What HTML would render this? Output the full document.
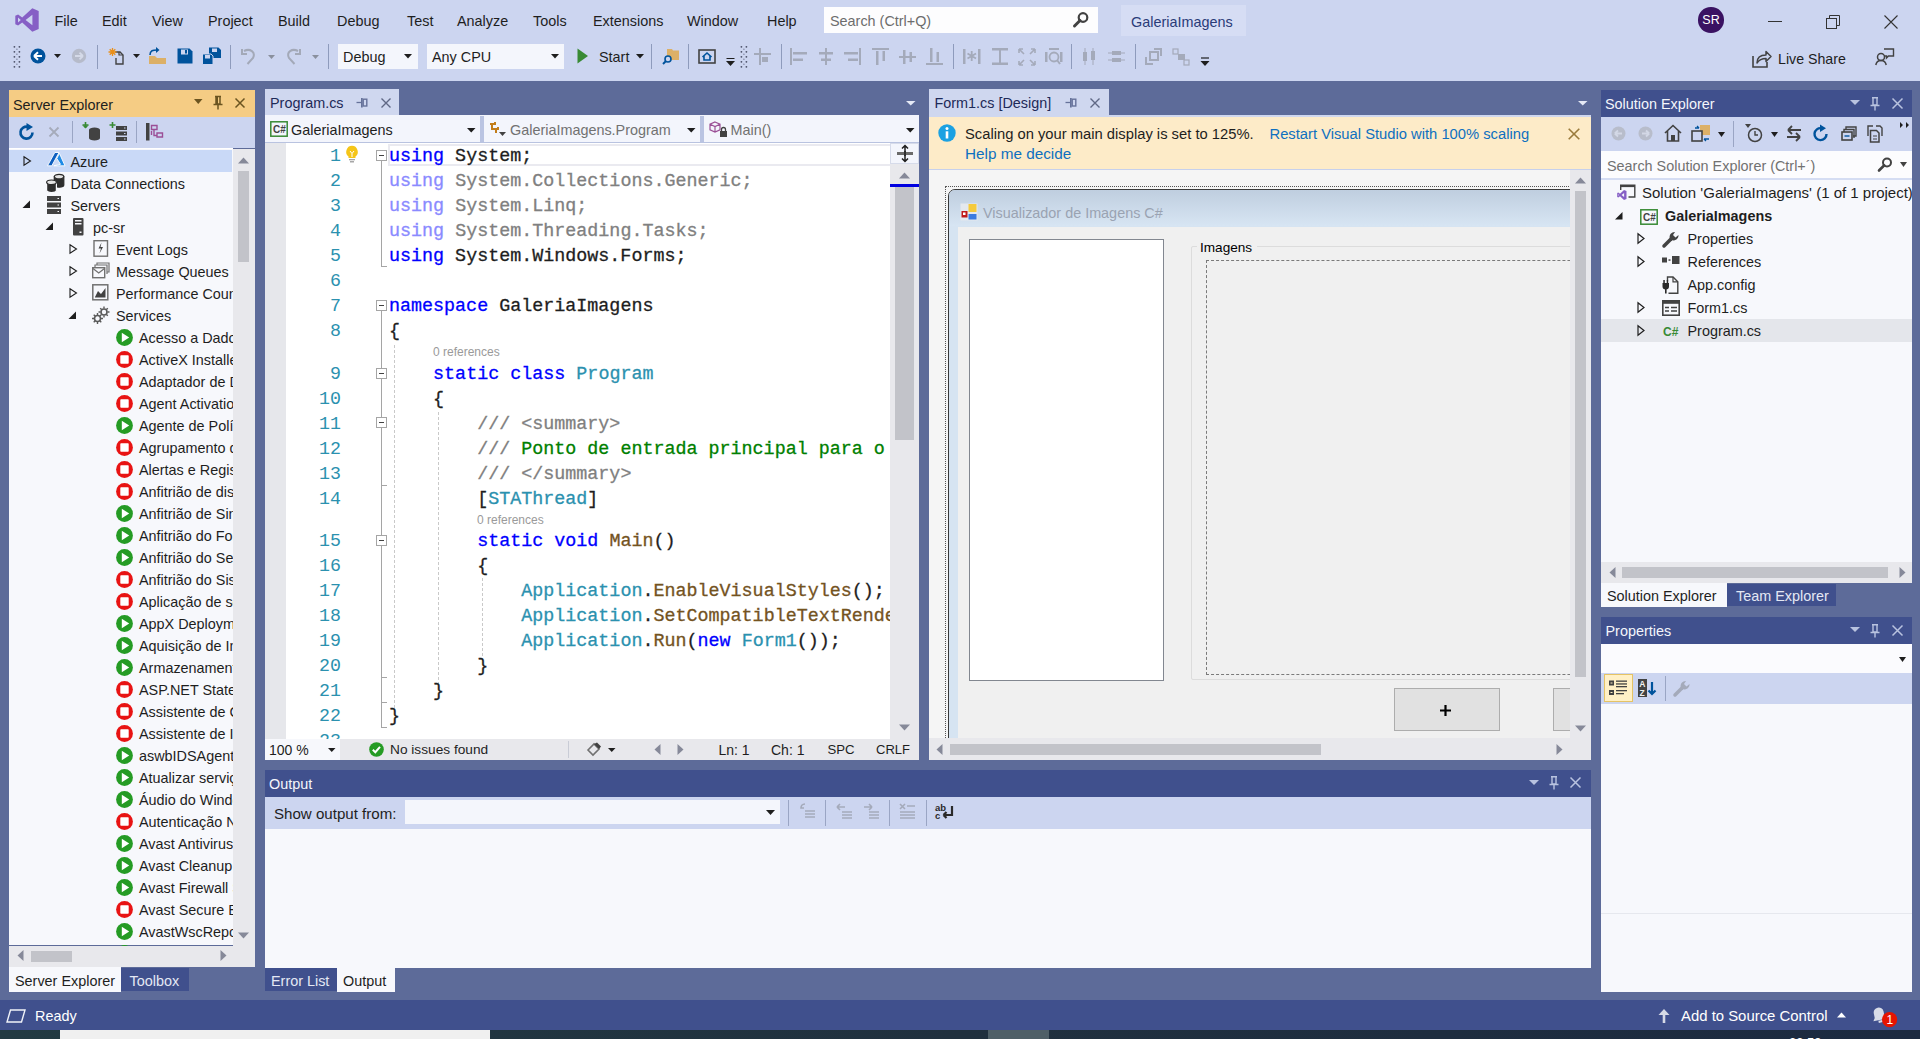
<!DOCTYPE html>
<html><head><meta charset="utf-8">
<style>
*{margin:0;padding:0;box-sizing:border-box}
html,body{width:1920px;height:1039px;overflow:hidden}
body{background:#5D6B99;font-family:"Liberation Sans",sans-serif;font-size:14.4px;color:#1E1E1E;position:relative}
.a{position:absolute}
.t{position:absolute;white-space:nowrap;line-height:16px;height:16px}
.mono{font-family:"Liberation Mono",monospace}
svg{position:absolute;overflow:visible}
.code div{position:absolute;-webkit-text-stroke:0.3px currentColor;white-space:pre;font-family:"Liberation Mono",monospace;font-size:18.38px;line-height:25px;height:25px}
.ln{position:absolute;font-family:"Liberation Mono",monospace;font-size:18.28px;line-height:25px;color:#2B91AF;text-align:right;width:60px}
.kw{color:#0000FF}.ty{color:#2B91AF}.cm{color:#008000}.dg{color:#808080}.mt{color:#74531F}.uk{color:#8A8AFF}
.row{position:absolute;height:22px;line-height:22px;white-space:nowrap}
</style></head><body>
<div class="a" style="left:9px;top:149px;width:224px;height:796px;background:#F7F8FC"></div>
<div class="a" style="left:265px;top:143px;width:625px;height:596px;background:#FFFFFF"></div>
<div class="a" style="left:929px;top:170px;width:646px;height:570px;background:#F5F5F5"></div>
<div class="a" style="left:265px;top:829px;width:1326px;height:139px;background:#F7F8FC"></div>
<div class="a" style="left:1601px;top:178px;width:311px;height:384px;background:#F7F8FC"></div>
<div class="a" style="left:1601px;top:703px;width:311px;height:289px;background:#F7F8FC"></div>
<div class="a" style="left:0;top:1000px;width:1920px;height:30px;background:#40508D"></div>
<div class="a" style="left:0;top:1030px;width:1920px;height:9px;background:linear-gradient(to right,#223A42,#20303E 50%,#1C2A40)"></div>
<div class="a" style="left:0;top:0;width:1920px;height:81px;background:#CCD5F0"></div>
<svg style="left:15px;top:8px" width="24" height="24" viewBox="0 0 24 24"><path fill="#865FC5" fill-rule="evenodd" d="M17.3 0.3 L23.7 2.9 V21.1 L17.3 23.7 L7.2 14.6 L3.1 17.6 L0.3 16.2 V7.8 L3.1 6.4 L7.2 9.4 Z M17.4 6.8 L10.6 12 L17.4 17.2 Z M3 9.4 V14.6 L5.8 12 Z"/></svg>
<div class="t" style="left:54.5px;top:12.5px">File</div>
<div class="t" style="left:102px;top:12.5px">Edit</div>
<div class="t" style="left:152px;top:12.5px">View</div>
<div class="t" style="left:208px;top:12.5px">Project</div>
<div class="t" style="left:278px;top:12.5px">Build</div>
<div class="t" style="left:337px;top:12.5px">Debug</div>
<div class="t" style="left:407px;top:12.5px">Test</div>
<div class="t" style="left:457px;top:12.5px">Analyze</div>
<div class="t" style="left:533px;top:12.5px">Tools</div>
<div class="t" style="left:593px;top:12.5px">Extensions</div>
<div class="t" style="left:687px;top:12.5px">Window</div>
<div class="t" style="left:767px;top:12.5px">Help</div>
<div class="a" style="left:824px;top:7px;width:274px;height:26px;background:#FDFDFE"></div>
<div class="t" style="left:830px;top:12.5px;color:#6D6D6D">Search (Ctrl+Q)</div>
<svg style="left:1072px;top:11px" width="18" height="18" viewBox="0 0 18 18"><circle cx="11" cy="6.5" r="4.3" fill="none" stroke="#424242" stroke-width="2.2"/><path d="M8 9.5 L2.5 15" stroke="#424242" stroke-width="3" stroke-linecap="round"/></svg>
<div class="a" style="left:1121px;top:5px;width:125px;height:31px;background:#D6DDF4"></div>
<div class="t" style="left:1131px;top:14px;color:#2A3B78">GaleriaImagens</div>
<div class="a" style="left:1698px;top:7px;width:25.5px;height:25.5px;border-radius:50%;background:#3A1262"></div>
<div class="t" style="left:1700px;top:12px;width:22px;text-align:center;color:#fff;font-size:12.5px">SR</div>
<div class="a" style="left:1768px;top:21px;width:14px;height:1px;background:#333"></div>
<svg style="left:1826px;top:15px" width="14" height="14" viewBox="0 0 14 14"><rect x="0.5" y="3.5" width="10" height="10" fill="none" stroke="#333"/><path d="M3.5 3.5 V0.5 H13.5 V10.5 H10.5" fill="none" stroke="#333"/></svg>
<svg style="left:1884px;top:15px" width="14" height="14" viewBox="0 0 14 14"><path d="M0.5 0.5 L13.5 13.5 M13.5 0.5 L0.5 13.5" stroke="#333" stroke-width="1.1"/></svg>
<!-- toolbar -->
<svg style="left:13px;top:46px" width="8" height="24" viewBox="0 0 8 24"><g fill="#4A4F66"><circle cx="1.4" cy="0.8" r=".9"/><circle cx="6.4" cy="0.8" r=".9"/><circle cx="1.4" cy="5.8" r=".9"/><circle cx="6.4" cy="5.8" r=".9"/><circle cx="1.4" cy="10.8" r=".9"/><circle cx="6.4" cy="10.8" r=".9"/><circle cx="1.4" cy="15.8" r=".9"/><circle cx="6.4" cy="15.8" r=".9"/><circle cx="1.4" cy="20.8" r=".9"/><circle cx="6.4" cy="20.8" r=".9"/><circle cx="3.9" cy="3.3" r=".8" fill-opacity=".55"/><circle cx="3.9" cy="8.3" r=".8" fill-opacity=".55"/><circle cx="3.9" cy="13.3" r=".8" fill-opacity=".55"/><circle cx="3.9" cy="18.3" r=".8" fill-opacity=".55"/></g></svg>
<svg style="left:30px;top:48px" width="16" height="16" viewBox="0 0 16 16"><circle cx="8" cy="8" r="7.5" fill="#00539C"/><path d="M4 8 L8 4.3 M4 8 L8 11.7 M4 8 H12" stroke="#fff" stroke-width="2" fill="none"/></svg>
<svg style="left:54px;top:54px" width="8" height="5" viewBox="0 0 8 5"><path d="M0 0 H7 L3.5 4 Z" fill="#1E1E1E"/></svg>
<svg style="left:71px;top:48px" width="16" height="16" viewBox="0 0 16 16"><circle cx="8" cy="8" r="7.2" fill="#B6BBCA"/><path d="M12 8 L8.5 4.7 M12 8 L8.5 11.3 M12 8 H4" stroke="#D5DAE8" stroke-width="1.8" fill="none"/></svg>
<div class="a" style="left:97px;top:45px;width:1px;height:24px;background:#8E9BBC"></div>
<svg style="left:108px;top:47px" width="18" height="18" viewBox="0 0 18 18"><path d="M7 5 H12 L15 8 V17 H8 V11" fill="none" stroke="#424242" stroke-width="1.4"/><path d="M11 5 V8 H15" fill="none" stroke="#424242" stroke-width="1.2"/><path d="M4.5 1 V9 M0.5 5 H8.5 M1.7 2.2 L7.3 7.8 M7.3 2.2 L1.7 7.8" stroke="#E98F1A" stroke-width="1.3"/></svg>
<svg style="left:133px;top:54px" width="8" height="5" viewBox="0 0 8 5"><path d="M0 0 H7 L3.5 4 Z" fill="#1E1E1E"/></svg>
<svg style="left:148px;top:47px" width="19" height="18" viewBox="0 0 19 18"><path d="M1 9 H7 L9 11 H18 V17 H1 Z" fill="#DCB067"/><path d="M2 8 C2 3.5 5 3 9 3" fill="none" stroke="#00539C" stroke-width="1.6"/><path d="M8 0 L11.5 3 L8 6 Z" fill="#00539C"/></svg>
<svg style="left:177px;top:48px" width="16" height="16" viewBox="0 0 16 16"><path d="M0.5 0.5 H12.5 L15.5 3.5 V15.5 H0.5 Z" fill="#00539C"/><rect x="4" y="1.5" width="7" height="5" fill="#CCD5F0"/><rect x="8" y="2" width="2" height="3.5" fill="#00539C"/></svg>
<svg style="left:202px;top:47px" width="20" height="18" viewBox="0 0 20 18"><path d="M7 0.5 H16.5 L19 3 V11 H7 Z" fill="#00539C"/><rect x="10" y="1.5" width="5" height="3.5" fill="#CCD5F0"/><path d="M0.5 7 H9 L11 9 V17.5 H0.5 Z" fill="#00539C" stroke="#CCD5F0"/><rect x="3" y="8" width="5" height="3.5" fill="#CCD5F0"/></svg>
<div class="a" style="left:230px;top:45px;width:1px;height:24px;background:#8E9BBC"></div>
<svg style="left:241px;top:48px" width="16" height="17" viewBox="0 0 16 17"><path d="M3 3 C9 0 15 4 12 10 L6.5 16" fill="none" stroke="#A3A9B8" stroke-width="2"/><path d="M1 1 V6 H6" fill="none" stroke="#A3A9B8" stroke-width="2"/></svg>
<svg style="left:268px;top:55px" width="8" height="5" viewBox="0 0 8 5"><path d="M0 0 H7 L3.5 4 Z" fill="#8A909E"/></svg>
<svg style="left:285px;top:48px" width="16" height="17" viewBox="0 0 16 17"><path d="M13 3 C7 0 1 4 4 10 L9.5 16" fill="none" stroke="#A3A9B8" stroke-width="2"/><path d="M15 1 V6 H10" fill="none" stroke="#A3A9B8" stroke-width="2"/></svg>
<svg style="left:312px;top:55px" width="8" height="5" viewBox="0 0 8 5"><path d="M0 0 H7 L3.5 4 Z" fill="#8A909E"/></svg>
<div class="a" style="left:328px;top:44px;width:1px;height:25px;background:#8E9BBC"></div>
<div class="a" style="left:338px;top:44px;width:80px;height:25px;background:#F4F6FC"></div>
<div class="t" style="left:343px;top:48.5px">Debug</div>
<svg style="left:404px;top:54px" width="9" height="5" viewBox="0 0 9 5"><path d="M0 0 H8 L4 4.5 Z" fill="#1E1E1E"/></svg>
<div class="a" style="left:427px;top:44px;width:137px;height:25px;background:#F4F6FC"></div>
<div class="t" style="left:432px;top:48.5px">Any CPU</div>
<svg style="left:551px;top:54px" width="9" height="5" viewBox="0 0 9 5"><path d="M0 0 H8 L4 4.5 Z" fill="#1E1E1E"/></svg>
<svg style="left:577px;top:48px" width="12" height="16" viewBox="0 0 12 16"><path d="M0.5 0.5 L11 8 L0.5 15.5 Z" fill="#388A34"/></svg>
<div class="t" style="left:599px;top:48.5px">Start</div>
<svg style="left:636px;top:54px" width="9" height="5" viewBox="0 0 9 5"><path d="M0 0 H8 L4 4.5 Z" fill="#1E1E1E"/></svg>
<div class="a" style="left:651px;top:44px;width:1px;height:25px;background:#8E9BBC"></div>
<svg style="left:662px;top:48px" width="18" height="17" viewBox="0 0 18 17"><path d="M5 1 H10 L11 2.5 H17 V12 H5 Z" fill="#DCB067"/><circle cx="6" cy="11" r="3" fill="#CCD5F0" stroke="#00539C" stroke-width="1.6"/><path d="M4 13 L1 16" stroke="#00539C" stroke-width="2"/></svg>
<div class="a" style="left:688px;top:44px;width:1px;height:25px;background:#8E9BBC"></div>
<svg style="left:698px;top:49px" width="18" height="15" viewBox="0 0 18 15"><rect x="1" y="1" width="16" height="13" fill="none" stroke="#424242" stroke-width="1.6"/><path d="M4.5 8 L9 4 L13.5 8 M6 7 V11 H12 V7" fill="none" stroke="#00539C" stroke-width="1.6"/></svg>
<svg style="left:726px;top:58px" width="9" height="10" viewBox="0 0 9 10"><path d="M0.5 0.5 H8.5" stroke="#1E1E1E"/><path d="M0 3 H9 L4.5 8 Z" fill="#1E1E1E"/></svg>
<svg style="left:740px;top:46px" width="8" height="24" viewBox="0 0 8 24"><g fill="#4A4F66"><circle cx="1.4" cy="0.8" r=".9"/><circle cx="6.4" cy="0.8" r=".9"/><circle cx="1.4" cy="5.8" r=".9"/><circle cx="6.4" cy="5.8" r=".9"/><circle cx="1.4" cy="10.8" r=".9"/><circle cx="6.4" cy="10.8" r=".9"/><circle cx="1.4" cy="15.8" r=".9"/><circle cx="6.4" cy="15.8" r=".9"/><circle cx="1.4" cy="20.8" r=".9"/><circle cx="6.4" cy="20.8" r=".9"/><circle cx="3.9" cy="3.3" r=".8" fill-opacity=".55"/><circle cx="3.9" cy="8.3" r=".8" fill-opacity=".55"/><circle cx="3.9" cy="13.3" r=".8" fill-opacity=".55"/><circle cx="3.9" cy="18.3" r=".8" fill-opacity=".55"/></g></svg>
<svg style="left:754px;top:48px" width="18" height="18" viewBox="0 0 18 18"><g fill="#A4AABA"><rect x="0" y="5" width="17" height="2"/><rect x="5" y="0" width="2" height="17"/><rect x="8" y="9" width="6" height="5"/></g></svg>
<div class="a" style="left:781px;top:44px;width:1px;height:25px;background:#8E9BBC"></div>
<svg style="left:790px;top:48px" width="18" height="18" viewBox="0 0 18 18"><g fill="#A4AABA"><rect x="0" y="0" width="2" height="17"/><rect x="3" y="4" width="14" height="2.5"/><rect x="3" y="10.5" width="10" height="2.5"/></g></svg>
<svg style="left:817px;top:48px" width="18" height="18" viewBox="0 0 18 18"><g fill="#A4AABA"><rect x="8" y="0" width="2" height="17"/><rect x="2" y="4" width="14" height="2.5"/><rect x="4" y="10.5" width="10" height="2.5"/></g></svg>
<svg style="left:844px;top:48px" width="18" height="18" viewBox="0 0 18 18"><g fill="#A4AABA"><rect x="15" y="0" width="2" height="17"/><rect x="0" y="4" width="14" height="2.5"/><rect x="4" y="10.5" width="10" height="2.5"/></g></svg>
<svg style="left:872px;top:48px" width="18" height="18" viewBox="0 0 18 18"><g fill="#A4AABA"><rect x="0" y="0" width="17" height="2"/><rect x="4" y="3" width="2.5" height="14"/><rect x="10.5" y="3" width="2.5" height="10"/></g></svg>
<svg style="left:899px;top:48px" width="18" height="18" viewBox="0 0 18 18"><g fill="#A4AABA"><rect x="0" y="8" width="17" height="2"/><rect x="4" y="2" width="2.5" height="14"/><rect x="10.5" y="4" width="2.5" height="10"/></g></svg>
<svg style="left:926px;top:48px" width="18" height="18" viewBox="0 0 18 18"><g fill="#A4AABA"><rect x="0" y="15" width="17" height="2"/><rect x="4" y="0" width="2.5" height="14"/><rect x="10.5" y="4" width="2.5" height="10"/></g></svg>
<div class="a" style="left:953px;top:44px;width:1px;height:25px;background:#8E9BBC"></div>
<svg style="left:963px;top:48px" width="18" height="18" viewBox="0 0 18 18"><g fill="#A4AABA"><rect x="0" y="1" width="2.5" height="15"/><rect x="15" y="1" width="2.5" height="15"/><path d="M8.7 3 V13 M4.5 5.5 L13 10.5 M13 5.5 L4.5 10.5" stroke="#A4AABA" stroke-width="1.8"/></g></svg>
<svg style="left:991px;top:48px" width="18" height="18" viewBox="0 0 18 18"><g fill="#A4AABA"><rect x="1" y="0" width="16" height="2.5"/><rect x="1" y="14.5" width="16" height="2.5"/><rect x="8" y="2" width="2" height="13"/></g></svg>
<svg style="left:1018px;top:48px" width="18" height="18" viewBox="0 0 18 18"><g stroke="#A4AABA" stroke-width="1.6" fill="none"><path d="M1 1 L6 6 M1 1 H5 M1 1 V5 M17 1 L12 6 M17 1 H13 M17 1 V5 M1 17 L6 12 M1 17 H5 M1 17 V13 M17 17 L12 12 M17 17 H13 M17 17 V13"/></g></svg>
<svg style="left:1045px;top:48px" width="18" height="18" viewBox="0 0 18 18"><g fill="#A4AABA"><rect x="0" y="4" width="2.5" height="10"/><rect x="15" y="4" width="2.5" height="10"/><rect x="4" y="0" width="10" height="2"/></g><circle cx="9" cy="9" r="4.5" fill="none" stroke="#A4AABA" stroke-width="1.8"/><path d="M12 12 L15 16" stroke="#A4AABA" stroke-width="2"/></svg>
<div class="a" style="left:1071px;top:44px;width:1px;height:25px;background:#8E9BBC"></div>
<svg style="left:1081px;top:48px" width="18" height="18" viewBox="0 0 18 18"><g fill="#A4AABA"><rect x="2" y="4" width="4" height="9"/><rect x="10" y="3" width="4" height="9"/><rect x="3.5" y="0" width="1" height="17"/><rect x="11.5" y="0" width="1" height="17"/></g></svg>
<svg style="left:1108px;top:48px" width="18" height="18" viewBox="0 0 18 18"><g fill="#A4AABA"><rect x="4" y="3" width="9" height="4"/><rect x="4" y="10" width="9" height="4"/><rect x="0" y="4.5" width="17" height="1"/><rect x="0" y="11.5" width="17" height="1"/></g></svg>
<div class="a" style="left:1135px;top:44px;width:1px;height:25px;background:#8E9BBC"></div>
<svg style="left:1145px;top:48px" width="18" height="18" viewBox="0 0 18 18"><g stroke="#A4AABA" stroke-width="2" fill="none"><rect x="5" y="4" width="8" height="8"/><path d="M9 1 H16 V8"/><path d="M1 9 V16 H8"/></g></svg>
<svg style="left:1172px;top:48px" width="18" height="18" viewBox="0 0 18 18"><g fill="#A4AABA"><rect x="1" y="1" width="5" height="5" fill="none" stroke="#A4AABA" stroke-width="1.2"/><rect x="6" y="6" width="7" height="6"/><rect x="12" y="12" width="5" height="5" fill="none" stroke="#A4AABA" stroke-width="1.2"/></g></svg>
<svg style="left:1200px;top:57px" width="10" height="10" viewBox="0 0 10 10"><path d="M1 1 H9" stroke="#1E1E1E" stroke-width="1.2"/><path d="M0.5 4 H9.5 L5 9 Z" fill="#1E1E1E"/></svg>
<svg style="left:1752px;top:50px" width="20" height="18" viewBox="0 0 20 18"><path d="M1 6 V17 H15 V12" fill="none" stroke="#424242" stroke-width="1.6"/><path d="M5 13 C5 7 9 5 14 5 V1.5 L19 6.5 L14 11.5 V8.5 C10 8.5 7 10 5 13 Z" fill="none" stroke="#424242" stroke-width="1.5" stroke-linejoin="round"/></svg>
<div class="t" style="left:1778px;top:51px;font-size:14.2px">Live Share</div>
<svg style="left:1875px;top:48px" width="20" height="18" viewBox="0 0 20 18"><circle cx="6" cy="9" r="3.5" fill="none" stroke="#424242" stroke-width="1.5"/><path d="M0.8 17 C1.5 13 4 12.5 6 12.5 C8 12.5 10.5 13 11.2 17" fill="none" stroke="#424242" stroke-width="1.5"/><path d="M9 1 H18.5 V8 H13.5 L11.5 10 V8 H9" fill="none" stroke="#424242" stroke-width="1.4"/></svg>
<div class="a" style="left:9px;top:90px;width:246px;height:27px;background:#F5CC84"></div>
<div class="t" style="left:13px;top:96.5px;color:#1E1E1E">Server Explorer</div>
<svg style="left:194px;top:99px" width="9" height="6" viewBox="0 0 9 6"><path d="M0 0 H8.5 L4.25 5 Z" fill="#6B5420"/></svg>
<svg style="left:213px;top:96px" width="10" height="14" viewBox="0 0 10 14"><path d="M2 0.5 H8 M3 0.5 V8 H7 V0.5 M0.5 8.5 H9.5 M5 8.5 V13.5" fill="none" stroke="#6B5420" stroke-width="1.5"/><rect x="3" y="1" width="2" height="7" fill="#6B5420"/></svg>
<svg style="left:235px;top:98px" width="10" height="10" viewBox="0 0 10 10"><path d="M0.5 0.5 L9.5 9.5 M9.5 0.5 L0.5 9.5" stroke="#6B5420" stroke-width="1.5"/></svg>
<div class="a" style="left:9px;top:117px;width:246px;height:31px;background:#CCD5F0"></div>
<svg style="left:19px;top:123px" width="17" height="18" viewBox="0 0 17 18"><path d="M13.5 9.5 A6 6 0 1 1 9 3.8" fill="none" stroke="#00539C" stroke-width="2.6"/><path d="M7.5 0 L14 4 L7.5 8 Z" fill="#00539C"/></svg>
<svg style="left:49px;top:127px" width="10" height="10" viewBox="0 0 10 10"><path d="M0.5 0.5 L9.5 9.5 M9.5 0.5 L0.5 9.5" stroke="#A5ABBA" stroke-width="1.8"/></svg>
<div class="a" style="left:72px;top:121px;width:1px;height:22px;background:#9AA5C4"></div>
<svg style="left:82px;top:122px" width="19" height="19" viewBox="0 0 19 19"><path d="M3.5 0 V6 M0.5 3 H6.5" stroke="#388A34" stroke-width="1.6"/><path d="M0.5 3.5 L3.5 6.5 L6.5 3.5" fill="#388A34"/><ellipse cx="12.5" cy="8" rx="5.5" ry="2.5" fill="#424242"/><path d="M7 8 V16 A5.5 2.5 0 0 0 18 16 V8" fill="#424242"/></svg>
<svg style="left:109px;top:122px" width="19" height="19" viewBox="0 0 19 19"><path d="M3.5 0 V6 M0.5 3 H6.5" stroke="#388A34" stroke-width="1.6"/><g fill="#424242"><rect x="7" y="4" width="11" height="4"/><rect x="7" y="9.5" width="11" height="4"/><rect x="7" y="15" width="11" height="4"/></g><g fill="#CCD5F0"><rect x="15" y="5.5" width="1.5" height="1"/><rect x="15" y="11" width="1.5" height="1"/><rect x="15" y="16.5" width="1.5" height="1"/></g></svg>
<div class="a" style="left:136px;top:121px;width:1px;height:22px;background:#9AA5C4"></div>
<svg style="left:146px;top:123px" width="18" height="18" viewBox="0 0 18 18"><rect x="0" y="0" width="3.5" height="17.5" fill="#424242"/><path d="M5.5 2.5 H11 V6.5 H5.5 Z M8 6.5 V12.5 H11 M11 10 H16.5 V14 H11 Z M5.5 8 V12" fill="none" stroke="#9B4F96" stroke-width="1.4"/></svg>
<div class="a" style="left:9px;top:148px;width:224px;height:1px;background:#FFFFFF"></div>
<div class="a" style="left:9px;top:150px;width:223px;height:22px;background:#C9D9F7"></div>
<div class="a" style="left:233px;top:149px;width:22px;height:818px;background:#E8E8EC"></div>
<div class="a" style="left:9px;top:946px;width:246px;height:21px;background:#E8E8EC"></div>
<svg style="left:238px;top:157px" width="11" height="7" viewBox="0 0 11 7"><path d="M0 6.5 L5.5 0.5 L11 6.5 Z" fill="#868999"/></svg>
<div class="a" style="left:238px;top:171px;width:11px;height:91px;background:#C2C3C9"></div>
<svg style="left:238px;top:932px" width="11" height="7" viewBox="0 0 11 7"><path d="M0 0.5 L5.5 6.5 L11 0.5 Z" fill="#868999"/></svg>
<svg style="left:17px;top:950px" width="7" height="11" viewBox="0 0 7 11"><path d="M6.5 0 L0.5 5.5 L6.5 11 Z" fill="#868999"/></svg>
<div class="a" style="left:31px;top:951px;width:41px;height:11px;background:#C2C3C9"></div>
<svg style="left:220px;top:950px" width="7" height="11" viewBox="0 0 7 11"><path d="M0.5 0 L6.5 5.5 L0.5 11 Z" fill="#868999"/></svg>
<div class="a" style="left:9px;top:967px;width:112px;height:25px;background:#F7F8FC"></div>
<div class="t" style="left:15px;top:972.5px;color:#1E1E1E">Server Explorer</div>
<div class="a" style="left:121px;top:968px;width:68px;height:23px;background:#40508D"></div>
<div class="t" style="left:129.5px;top:972.5px;color:#E4E8F4">Toolbox</div>
<div class="a" style="left:9px;top:149px;width:224px;height:797px;overflow:hidden">
<svg style="left:14px;top:7px" width="9" height="10" viewBox="0 0 9 10"><path d="M1 0.8 L7.5 5 L1 9.2 Z" fill="none" stroke="#1E1E1E" stroke-width="1.1"/></svg>
<svg style="left:37.5px;top:3px" width="19" height="16" viewBox="0 0 19 16"><g stroke="#fff" stroke-width=".9" stroke-linejoin="round"><path d="M7.8 0.5 H12 L4.8 13.8 H0.5 Z" fill="#0D5FBF"/><path d="M12.4 1.3 L18 13.8 H6.8 L13.5 12.3 L9.8 6.5 Z" fill="#1E8BE6"/></g></svg>
<div class="t" style="left:61.5px;top:4.5px;color:#1E1E1E">Azure</div>
<svg style="left:37px;top:24px" width="19" height="20" viewBox="0 0 19 20"><g stroke="#2A2A2A" stroke-width="1.2"><path d="M8.3 3.8 V12 A4.75 2.2 0 0 0 17.8 12 V3.8 Z" fill="#2E2E2E"/><ellipse cx="13.05" cy="3.6" rx="4.75" ry="2.3" fill="#E4E4E4"/><path d="M0.6 9.5 V17.3 A4.9 2.2 0 0 0 10.4 17.3 V9.5 Z" fill="#2E2E2E" stroke="#F7F8FC"/><ellipse cx="5.5" cy="9.3" rx="4.9" ry="2.3" fill="#E4E4E4"/></g></svg>
<div class="t" style="left:61.5px;top:26.5px;color:#1E1E1E">Data Connections</div>
<svg style="left:13px;top:51px" width="9" height="9" viewBox="0 0 9 9"><path d="M8 0.5 V8 H0.5 Z" fill="#1E1E1E"/></svg>
<svg style="left:38px;top:47px" width="14" height="18" viewBox="0 0 14 18"><g fill="#424242"><rect x="0" y="0" width="14" height="5"/><rect x="0" y="6.5" width="14" height="5"/><rect x="0" y="13" width="14" height="5"/></g><g fill="#F7F8FC"><rect x="10.5" y="2" width="1.5" height="1"/><rect x="10.5" y="8.5" width="1.5" height="1"/><rect x="10.5" y="15" width="1.5" height="1"/></g></svg>
<div class="t" style="left:61.5px;top:48.5px;color:#1E1E1E">Servers</div>
<svg style="left:36px;top:73px" width="9" height="9" viewBox="0 0 9 9"><path d="M8 0.5 V8 H0.5 Z" fill="#1E1E1E"/></svg>
<svg style="left:64px;top:69px" width="11" height="18" viewBox="0 0 11 18"><rect x="0" y="0" width="10.5" height="17.5" rx="1" fill="#424242"/><rect x="2" y="2" width="6.5" height="1.5" fill="#F7F8FC"/><rect x="2" y="5" width="6.5" height="1.5" fill="#F7F8FC"/><rect x="6.5" y="13.5" width="2" height="1.5" fill="#F7F8FC"/></svg>
<div class="t" style="left:84px;top:70.5px;color:#1E1E1E">pc-sr</div>
<svg style="left:60px;top:95px" width="9" height="10" viewBox="0 0 9 10"><path d="M1 0.8 L7.5 5 L1 9.2 Z" fill="none" stroke="#1E1E1E" stroke-width="1.1"/></svg>
<svg style="left:84px;top:91px" width="16" height="17" viewBox="0 0 16 17"><rect x="1" y="0.7" width="13.5" height="15.5" fill="none" stroke="#717171" stroke-width="1.4"/><path d="M8.5 2.5 L5.5 8.5 H8 L6.5 13.5 L10 7 H7.5 Z" fill="#424242"/></svg>
<div class="t" style="left:107px;top:92.5px;color:#1E1E1E">Event Logs</div>
<svg style="left:60px;top:117px" width="9" height="10" viewBox="0 0 9 10"><path d="M1 0.8 L7.5 5 L1 9.2 Z" fill="none" stroke="#1E1E1E" stroke-width="1.1"/></svg>
<svg style="left:83px;top:113px" width="18" height="17" viewBox="0 0 18 17"><path d="M5 3.5 V1 H17 V10 H14.5 M3 5.5 V3 H15 V12" fill="none" stroke="#717171" stroke-width="1.2"/><rect x="0.7" y="5.7" width="12" height="10" fill="#F7F8FC" stroke="#717171" stroke-width="1.4"/><path d="M1 6.5 L6.7 11 L12.5 6.5" fill="none" stroke="#717171" stroke-width="1.3"/></svg>
<div class="t" style="left:107px;top:114.5px;color:#1E1E1E">Message Queues</div>
<svg style="left:60px;top:139px" width="9" height="10" viewBox="0 0 9 10"><path d="M1 0.8 L7.5 5 L1 9.2 Z" fill="none" stroke="#1E1E1E" stroke-width="1.1"/></svg>
<svg style="left:83px;top:135px" width="17" height="17" viewBox="0 0 17 17"><rect x="0.8" y="0.8" width="15" height="15" fill="none" stroke="#717171" stroke-width="1.5"/><path d="M3 13 L6 7 L9 10 L13.5 4 V13.5 H3 Z" fill="#424242"/></svg>
<div class="t" style="left:107px;top:136.5px;color:#1E1E1E">Performance Counters</div>
<svg style="left:59px;top:162px" width="9" height="9" viewBox="0 0 9 9"><path d="M8 0.5 V8 H0.5 Z" fill="#1E1E1E"/></svg>
<svg style="left:83px;top:157px" width="18" height="18" viewBox="0 0 18 18"><g fill="none" stroke="#5A5A5A" stroke-width="1.6"><circle cx="12" cy="6" r="3"/><circle cx="5.5" cy="12.5" r="3"/></g><g stroke="#5A5A5A" stroke-width="1.4"><path d="M12 0.5 V2.5 M12 9.5 V11.5 M6.5 6 H8.5 M15.5 6 H17.5 M8.2 2.2 L9.6 3.6 M14.4 8.4 L15.8 9.8 M15.8 2.2 L14.4 3.6"/><path d="M5.5 7 V9 M5.5 16 V18 M0 12.5 H2 M9 12.5 H11 M1.7 8.7 L3.1 10.1 M7.9 14.9 L9.3 16.3 M9.3 8.7 L7.9 10.1 M3.1 14.9 L1.7 16.3"/></g></svg>
<div class="t" style="left:107px;top:158.5px;color:#1E1E1E">Services</div>
<svg style="left:106.5px;top:179.5px" width="17" height="17" viewBox="0 0 17 17"><circle cx="8.5" cy="8.5" r="8.4" fill="#259B24"/><path d="M5.8 3.7 L13.2 8.5 L5.8 13.3 Z" fill="#fff"/></svg>
<div class="t" style="left:130px;top:180.5px;color:#1E1E1E">Acesso a Dados do Usuário</div>
<svg style="left:106.5px;top:201.5px" width="17" height="17" viewBox="0 0 17 17"><circle cx="8.5" cy="8.5" r="8.4" fill="#E81313"/><rect x="4.3" y="4.3" width="8.4" height="8.4" rx="0.8" fill="#fff"/></svg>
<div class="t" style="left:130px;top:202.5px;color:#1E1E1E">ActiveX Installer (AxInstSV)</div>
<svg style="left:106.5px;top:223.5px" width="17" height="17" viewBox="0 0 17 17"><circle cx="8.5" cy="8.5" r="8.4" fill="#E81313"/><rect x="4.3" y="4.3" width="8.4" height="8.4" rx="0.8" fill="#fff"/></svg>
<div class="t" style="left:130px;top:224.5px;color:#1E1E1E">Adaptador de Desempenho</div>
<svg style="left:106.5px;top:245.5px" width="17" height="17" viewBox="0 0 17 17"><circle cx="8.5" cy="8.5" r="8.4" fill="#E81313"/><rect x="4.3" y="4.3" width="8.4" height="8.4" rx="0.8" fill="#fff"/></svg>
<div class="t" style="left:130px;top:246.5px;color:#1E1E1E">Agent Activation Runtime</div>
<svg style="left:106.5px;top:267.5px" width="17" height="17" viewBox="0 0 17 17"><circle cx="8.5" cy="8.5" r="8.4" fill="#259B24"/><path d="M5.8 3.7 L13.2 8.5 L5.8 13.3 Z" fill="#fff"/></svg>
<div class="t" style="left:130px;top:268.5px;color:#1E1E1E">Agente de Política IPsec</div>
<svg style="left:106.5px;top:289.5px" width="17" height="17" viewBox="0 0 17 17"><circle cx="8.5" cy="8.5" r="8.4" fill="#E81313"/><rect x="4.3" y="4.3" width="8.4" height="8.4" rx="0.8" fill="#fff"/></svg>
<div class="t" style="left:130px;top:290.5px;color:#1E1E1E">Agrupamento  de Rede</div>
<svg style="left:106.5px;top:311.5px" width="17" height="17" viewBox="0 0 17 17"><circle cx="8.5" cy="8.5" r="8.4" fill="#E81313"/><rect x="4.3" y="4.3" width="8.4" height="8.4" rx="0.8" fill="#fff"/></svg>
<div class="t" style="left:130px;top:312.5px;color:#1E1E1E">Alertas e Registros</div>
<svg style="left:106.5px;top:333.5px" width="17" height="17" viewBox="0 0 17 17"><circle cx="8.5" cy="8.5" r="8.4" fill="#E81313"/><rect x="4.3" y="4.3" width="8.4" height="8.4" rx="0.8" fill="#fff"/></svg>
<div class="t" style="left:130px;top:334.5px;color:#1E1E1E">Anfitrião de dispositivo</div>
<svg style="left:106.5px;top:355.5px" width="17" height="17" viewBox="0 0 17 17"><circle cx="8.5" cy="8.5" r="8.4" fill="#259B24"/><path d="M5.8 3.7 L13.2 8.5 L5.8 13.3 Z" fill="#fff"/></svg>
<div class="t" style="left:130px;top:356.5px;color:#1E1E1E">Anfitrião de Sincronização</div>
<svg style="left:106.5px;top:377.5px" width="17" height="17" viewBox="0 0 17 17"><circle cx="8.5" cy="8.5" r="8.4" fill="#259B24"/><path d="M5.8 3.7 L13.2 8.5 L5.8 13.3 Z" fill="#fff"/></svg>
<div class="t" style="left:130px;top:378.5px;color:#1E1E1E">Anfitrião do Fornecedor</div>
<svg style="left:106.5px;top:399.5px" width="17" height="17" viewBox="0 0 17 17"><circle cx="8.5" cy="8.5" r="8.4" fill="#259B24"/><path d="M5.8 3.7 L13.2 8.5 L5.8 13.3 Z" fill="#fff"/></svg>
<div class="t" style="left:130px;top:400.5px;color:#1E1E1E">Anfitrião do Serviço</div>
<svg style="left:106.5px;top:421.5px" width="17" height="17" viewBox="0 0 17 17"><circle cx="8.5" cy="8.5" r="8.4" fill="#E81313"/><rect x="4.3" y="4.3" width="8.4" height="8.4" rx="0.8" fill="#fff"/></svg>
<div class="t" style="left:130px;top:422.5px;color:#1E1E1E">Anfitrião do Sistema</div>
<svg style="left:106.5px;top:443.5px" width="17" height="17" viewBox="0 0 17 17"><circle cx="8.5" cy="8.5" r="8.4" fill="#E81313"/><rect x="4.3" y="4.3" width="8.4" height="8.4" rx="0.8" fill="#fff"/></svg>
<div class="t" style="left:130px;top:444.5px;color:#1E1E1E">Aplicação de serviço</div>
<svg style="left:106.5px;top:465.5px" width="17" height="17" viewBox="0 0 17 17"><circle cx="8.5" cy="8.5" r="8.4" fill="#259B24"/><path d="M5.8 3.7 L13.2 8.5 L5.8 13.3 Z" fill="#fff"/></svg>
<div class="t" style="left:130px;top:466.5px;color:#1E1E1E">AppX Deployment Service</div>
<svg style="left:106.5px;top:487.5px" width="17" height="17" viewBox="0 0 17 17"><circle cx="8.5" cy="8.5" r="8.4" fill="#259B24"/><path d="M5.8 3.7 L13.2 8.5 L5.8 13.3 Z" fill="#fff"/></svg>
<div class="t" style="left:130px;top:488.5px;color:#1E1E1E">Aquisição de Imagens</div>
<svg style="left:106.5px;top:509.5px" width="17" height="17" viewBox="0 0 17 17"><circle cx="8.5" cy="8.5" r="8.4" fill="#259B24"/><path d="M5.8 3.7 L13.2 8.5 L5.8 13.3 Z" fill="#fff"/></svg>
<div class="t" style="left:130px;top:510.5px;color:#1E1E1E">Armazenamento</div>
<svg style="left:106.5px;top:531.5px" width="17" height="17" viewBox="0 0 17 17"><circle cx="8.5" cy="8.5" r="8.4" fill="#E81313"/><rect x="4.3" y="4.3" width="8.4" height="8.4" rx="0.8" fill="#fff"/></svg>
<div class="t" style="left:130px;top:532.5px;color:#1E1E1E">ASP.NET State Service</div>
<svg style="left:106.5px;top:553.5px" width="17" height="17" viewBox="0 0 17 17"><circle cx="8.5" cy="8.5" r="8.4" fill="#E81313"/><rect x="4.3" y="4.3" width="8.4" height="8.4" rx="0.8" fill="#fff"/></svg>
<div class="t" style="left:130px;top:554.5px;color:#1E1E1E">Assistente de Conectividade</div>
<svg style="left:106.5px;top:575.5px" width="17" height="17" viewBox="0 0 17 17"><circle cx="8.5" cy="8.5" r="8.4" fill="#E81313"/><rect x="4.3" y="4.3" width="8.4" height="8.4" rx="0.8" fill="#fff"/></svg>
<div class="t" style="left:130px;top:576.5px;color:#1E1E1E">Assistente de Início</div>
<svg style="left:106.5px;top:597.5px" width="17" height="17" viewBox="0 0 17 17"><circle cx="8.5" cy="8.5" r="8.4" fill="#259B24"/><path d="M5.8 3.7 L13.2 8.5 L5.8 13.3 Z" fill="#fff"/></svg>
<div class="t" style="left:130px;top:598.5px;color:#1E1E1E">aswbIDSAgent</div>
<svg style="left:106.5px;top:619.5px" width="17" height="17" viewBox="0 0 17 17"><circle cx="8.5" cy="8.5" r="8.4" fill="#259B24"/><path d="M5.8 3.7 L13.2 8.5 L5.8 13.3 Z" fill="#fff"/></svg>
<div class="t" style="left:130px;top:620.5px;color:#1E1E1E">Atualizar serviço</div>
<svg style="left:106.5px;top:641.5px" width="17" height="17" viewBox="0 0 17 17"><circle cx="8.5" cy="8.5" r="8.4" fill="#259B24"/><path d="M5.8 3.7 L13.2 8.5 L5.8 13.3 Z" fill="#fff"/></svg>
<div class="t" style="left:130px;top:642.5px;color:#1E1E1E">Áudio do Windows</div>
<svg style="left:106.5px;top:663.5px" width="17" height="17" viewBox="0 0 17 17"><circle cx="8.5" cy="8.5" r="8.4" fill="#E81313"/><rect x="4.3" y="4.3" width="8.4" height="8.4" rx="0.8" fill="#fff"/></svg>
<div class="t" style="left:130px;top:664.5px;color:#1E1E1E">Autenticação Natural</div>
<svg style="left:106.5px;top:685.5px" width="17" height="17" viewBox="0 0 17 17"><circle cx="8.5" cy="8.5" r="8.4" fill="#259B24"/><path d="M5.8 3.7 L13.2 8.5 L5.8 13.3 Z" fill="#fff"/></svg>
<div class="t" style="left:130px;top:686.5px;color:#1E1E1E">Avast Antivirus</div>
<svg style="left:106.5px;top:707.5px" width="17" height="17" viewBox="0 0 17 17"><circle cx="8.5" cy="8.5" r="8.4" fill="#259B24"/><path d="M5.8 3.7 L13.2 8.5 L5.8 13.3 Z" fill="#fff"/></svg>
<div class="t" style="left:130px;top:708.5px;color:#1E1E1E">Avast Cleanup</div>
<svg style="left:106.5px;top:729.5px" width="17" height="17" viewBox="0 0 17 17"><circle cx="8.5" cy="8.5" r="8.4" fill="#259B24"/><path d="M5.8 3.7 L13.2 8.5 L5.8 13.3 Z" fill="#fff"/></svg>
<div class="t" style="left:130px;top:730.5px;color:#1E1E1E">Avast Firewall  Service</div>
<svg style="left:106.5px;top:751.5px" width="17" height="17" viewBox="0 0 17 17"><circle cx="8.5" cy="8.5" r="8.4" fill="#E81313"/><rect x="4.3" y="4.3" width="8.4" height="8.4" rx="0.8" fill="#fff"/></svg>
<div class="t" style="left:130px;top:752.5px;color:#1E1E1E">Avast Secure Browser</div>
<svg style="left:106.5px;top:773.5px" width="17" height="17" viewBox="0 0 17 17"><circle cx="8.5" cy="8.5" r="8.4" fill="#259B24"/><path d="M5.8 3.7 L13.2 8.5 L5.8 13.3 Z" fill="#fff"/></svg>
<div class="t" style="left:130px;top:774.5px;color:#1E1E1E">AvastWscReporter</div>
<svg style="left:106.5px;top:795.5px" width="17" height="17" viewBox="0 0 17 17"><circle cx="8.5" cy="8.5" r="8.4" fill="#259B24"/><path d="M5.8 3.7 L13.2 8.5 L5.8 13.3 Z" fill="#fff"/></svg>
<div class="t" style="left:130px;top:796.5px;color:#1E1E1E">Avast Tools</div>
</div>
<div class="a" style="left:265px;top:89px;width:134px;height:26px;background:#CFD7EF"></div>
<div class="t" style="left:270px;top:95px;color:#1E2A58">Program.cs</div>
<svg style="left:356px;top:97px" width="12" height="12" viewBox="0 0 12 12"><path d="M0.5 5.5 H5.5" stroke="#66729A" stroke-width="1.3"/><rect x="5" y="1" width="1.7" height="9.5" fill="#66729A"/><rect x="7.2" y="2.2" width="3.6" height="6.8" fill="none" stroke="#66729A" stroke-width="1.4"/></svg>
<svg style="left:381px;top:98px" width="10" height="10" viewBox="0 0 10 10"><path d="M0.5 0.5 L9.5 9.5 M9.5 0.5 L0.5 9.5" stroke="#5F6885" stroke-width="1.4"/></svg>
<svg style="left:906px;top:101px" width="10" height="5" viewBox="0 0 10 5"><path d="M0 0 H9.5 L4.75 4.5 Z" fill="#E6EAF6"/></svg>
<div class="a" style="left:265px;top:115px;width:654px;height:28px;background:#F3F5FC;border-bottom:1px solid #B9C3E0"></div>
<div class="a" style="left:480px;top:116px;width:4px;height:26px;background:#BAC4E2"></div>
<div class="a" style="left:700px;top:116px;width:4px;height:26px;background:#BAC4E2"></div>
<svg style="left:270px;top:121px" width="18" height="16" viewBox="0 0 18 16"><rect x="0.8" y="0.8" width="16.4" height="14.4" fill="#F3F5FC" stroke="#388A34" stroke-width="1.5"/><text x="3" y="11.5" font-family="Liberation Sans" font-size="10" font-weight="bold" fill="#424242">C#</text></svg>
<div class="t" style="left:291px;top:121.5px;color:#1E1E1E">GaleriaImagens</div>
<svg style="left:467px;top:128px" width="9" height="5" viewBox="0 0 9 5"><path d="M0 0 H8.5 L4.25 4.5 Z" fill="#1E1E1E"/></svg>
<svg style="left:489px;top:121px" width="18" height="17" viewBox="0 0 18 17"><path d="M1 3 H6 V1 M3 3 V8 H9 V6 M7 8 V12" fill="none" stroke="#C27D1A" stroke-width="2"/><path d="M10 11 L13.5 15 L17 11 Z" fill="#424242"/></svg>
<div class="t" style="left:510px;top:121.5px;color:#717171">GaleriaImagens.Program</div>
<svg style="left:687px;top:128px" width="9" height="5" viewBox="0 0 9 5"><path d="M0 0 H8.5 L4.25 4.5 Z" fill="#1E1E1E"/></svg>
<svg style="left:709px;top:121px" width="19" height="17" viewBox="0 0 19 17"><path d="M6 1 L11 3.2 V8.8 L6 11 L1 8.8 V3.2 Z M1 3.2 L6 5.5 L11 3.2 M6 5.5 V11" fill="none" stroke="#9B4F96" stroke-width="1.2"/><rect x="11" y="10" width="7" height="6" fill="#424242"/><path d="M12.5 10 V8.5 A2 2 0 0 1 16.5 8.5 V10" fill="none" stroke="#424242" stroke-width="1.3"/></svg>
<div class="t" style="left:730.5px;top:121.5px;color:#717171">Main()</div>
<svg style="left:906px;top:128px" width="9" height="5" viewBox="0 0 9 5"><path d="M0 0 H8.5 L4.25 4.5 Z" fill="#1E1E1E"/></svg>
<div class="a" style="left:265px;top:143px;width:21px;height:596px;background:#E6E7EB"></div>
<div class="a" style="left:388px;top:144px;width:502px;height:22px;border:2px solid #EAEAF0;border-right:none"></div>
<svg style="left:345px;top:145px" width="14" height="18" viewBox="0 0 14 18"><path d="M7 0.8 A6 6 0 0 1 10.5 11.5 V13 H3.5 V11.5 A6 6 0 0 1 7 0.8 Z" fill="#F5C518"/><path d="M5 6 L7 8.5 L9 6 M7 8.5 V12" fill="none" stroke="#fff" stroke-width="1"/><rect x="4" y="14" width="6" height="1.3" fill="#A7A7A7"/><rect x="5" y="16" width="4" height="1.5" fill="#A7A7A7"/></svg>
<div class="a" style="left:265px;top:143px;width:625px;height:596px;overflow:hidden">
<div class="ln" style="left:16px;top:0.5px">1</div>
<div class="ln" style="left:16px;top:25.5px">2</div>
<div class="ln" style="left:16px;top:50.5px">3</div>
<div class="ln" style="left:16px;top:75.5px">4</div>
<div class="ln" style="left:16px;top:100.5px">5</div>
<div class="ln" style="left:16px;top:125.5px">6</div>
<div class="ln" style="left:16px;top:150.5px">7</div>
<div class="ln" style="left:16px;top:175.5px">8</div>
<div class="ln" style="left:16px;top:218.5px">9</div>
<div class="ln" style="left:16px;top:243.5px">10</div>
<div class="ln" style="left:16px;top:268.5px">11</div>
<div class="ln" style="left:16px;top:293.5px">12</div>
<div class="ln" style="left:16px;top:318.5px">13</div>
<div class="ln" style="left:16px;top:343.5px">14</div>
<div class="ln" style="left:16px;top:385.5px">15</div>
<div class="ln" style="left:16px;top:410.5px">16</div>
<div class="ln" style="left:16px;top:435.5px">17</div>
<div class="ln" style="left:16px;top:460.5px">18</div>
<div class="ln" style="left:16px;top:485.5px">19</div>
<div class="ln" style="left:16px;top:510.5px">20</div>
<div class="ln" style="left:16px;top:535.5px">21</div>
<div class="ln" style="left:16px;top:560.5px">22</div>
<div class="ln" style="left:16px;top:585.5px">23</div>
<div class="a" style="left:116px;top:18px;width:1px;height:106px;background:#A5A5A5"></div>
<div class="a" style="left:116px;top:123px;width:6px;height:1px;background:#A5A5A5"></div>
<div class="a" style="left:116px;top:168px;width:1px;height:416px;background:#A5A5A5"></div>
<div class="a" style="left:116px;top:342px;width:6px;height:1px;background:#A5A5A5"></div>
<div class="a" style="left:116px;top:534px;width:6px;height:1px;background:#A5A5A5"></div>
<div class="a" style="left:116px;top:559px;width:6px;height:1px;background:#A5A5A5"></div>
<div class="a" style="left:116px;top:584px;width:6px;height:1px;background:#A5A5A5"></div>
<div class="a" style="left:111px;top:7px;width:11px;height:11px;border:1px solid #A5A5A5;background:#fff"><div class="a" style="left:2px;top:4px;width:5px;height:1px;background:#424242"></div></div>
<div class="a" style="left:111px;top:157px;width:11px;height:11px;border:1px solid #A5A5A5;background:#fff"><div class="a" style="left:2px;top:4px;width:5px;height:1px;background:#424242"></div></div>
<div class="a" style="left:111px;top:225px;width:11px;height:11px;border:1px solid #A5A5A5;background:#fff"><div class="a" style="left:2px;top:4px;width:5px;height:1px;background:#424242"></div></div>
<div class="a" style="left:111px;top:274px;width:11px;height:11px;border:1px solid #A5A5A5;background:#fff"><div class="a" style="left:2px;top:4px;width:5px;height:1px;background:#424242"></div></div>
<div class="a" style="left:111px;top:392px;width:11px;height:11px;border:1px solid #A5A5A5;background:#fff"><div class="a" style="left:2px;top:4px;width:5px;height:1px;background:#424242"></div></div>
<div class="a" style="left:129px;top:202px;width:1px;height:367px;background:repeating-linear-gradient(to bottom,#C9C9C9 0 3px,transparent 3px 5px)"></div>
<div class="a" style="left:173px;top:269px;width:1px;height:276px;background:repeating-linear-gradient(to bottom,#C9C9C9 0 3px,transparent 3px 5px)"></div>
<div class="a" style="left:217px;top:435px;width:1px;height:84px;background:repeating-linear-gradient(to bottom,#C9C9C9 0 3px,transparent 3px 5px)"></div>
<div class="a code" style="left:124px;top:0.5px;width:1px;height:25px"><div style="left:0;top:0"><span class="kw">using</span> System;</div></div>
<div class="a code" style="left:124px;top:25.5px;width:1px;height:25px"><div style="left:0;top:0"><span class="uk">using</span> <span class="dg">System.Collections.Generic;</span></div></div>
<div class="a code" style="left:124px;top:50.5px;width:1px;height:25px"><div style="left:0;top:0"><span class="uk">using</span> <span class="dg">System.Linq;</span></div></div>
<div class="a code" style="left:124px;top:75.5px;width:1px;height:25px"><div style="left:0;top:0"><span class="uk">using</span> <span class="dg">System.Threading.Tasks;</span></div></div>
<div class="a code" style="left:124px;top:100.5px;width:1px;height:25px"><div style="left:0;top:0"><span class="kw">using</span> System.Windows.Forms;</div></div>
<div class="a code" style="left:124px;top:150.5px;width:1px;height:25px"><div style="left:0;top:0"><span class="kw">namespace</span> GaleriaImagens</div></div>
<div class="a code" style="left:124px;top:175.5px;width:1px;height:25px"><div style="left:0;top:0">{</div></div>
<div class="a code" style="left:124px;top:218.5px;width:1px;height:25px"><div style="left:0;top:0">    <span class="kw">static</span> <span class="kw">class</span> <span class="ty">Program</span></div></div>
<div class="a code" style="left:124px;top:243.5px;width:1px;height:25px"><div style="left:0;top:0">    {</div></div>
<div class="a code" style="left:124px;top:268.5px;width:1px;height:25px"><div style="left:0;top:0">        <span class="dg">///</span> <span class="dg">&lt;summary&gt;</span></div></div>
<div class="a code" style="left:124px;top:293.5px;width:1px;height:25px"><div style="left:0;top:0">        <span class="dg">///</span> <span class="cm">Ponto de entrada principal para o aplicativo.</span></div></div>
<div class="a code" style="left:124px;top:318.5px;width:1px;height:25px"><div style="left:0;top:0">        <span class="dg">///</span> <span class="dg">&lt;/summary&gt;</span></div></div>
<div class="a code" style="left:124px;top:343.5px;width:1px;height:25px"><div style="left:0;top:0">        [<span class="ty">STAThread</span>]</div></div>
<div class="a code" style="left:124px;top:385.5px;width:1px;height:25px"><div style="left:0;top:0">        <span class="kw">static</span> <span class="kw">void</span> <span class="mt">Main</span>()</div></div>
<div class="a code" style="left:124px;top:410.5px;width:1px;height:25px"><div style="left:0;top:0">        {</div></div>
<div class="a code" style="left:124px;top:435.5px;width:1px;height:25px"><div style="left:0;top:0">            <span class="ty">Application</span>.<span class="mt">EnableVisualStyles</span>();</div></div>
<div class="a code" style="left:124px;top:460.5px;width:1px;height:25px"><div style="left:0;top:0">            <span class="ty">Application</span>.<span class="mt">SetCompatibleTextRenderingDefault</span>(<span class="kw">false</span>);</div></div>
<div class="a code" style="left:124px;top:485.5px;width:1px;height:25px"><div style="left:0;top:0">            <span class="ty">Application</span>.<span class="mt">Run</span>(<span class="kw">new</span> <span class="ty">Form1</span>());</div></div>
<div class="a code" style="left:124px;top:510.5px;width:1px;height:25px"><div style="left:0;top:0">        }</div></div>
<div class="a code" style="left:124px;top:535.5px;width:1px;height:25px"><div style="left:0;top:0">    }</div></div>
<div class="a code" style="left:124px;top:560.5px;width:1px;height:25px"><div style="left:0;top:0">}</div></div>
<div class="t" style="left:168px;top:202px;font-size:12px;color:#9A9A9A;line-height:14px;height:14px">0 references</div>
<div class="t" style="left:212px;top:370px;font-size:12px;color:#9A9A9A;line-height:14px;height:14px">0 references</div>
</div>
<div class="a" style="left:890px;top:143px;width:29px;height:596px;background:#E8E8EC"></div>
<div class="a" style="left:890px;top:143px;width:29px;height:21px;background:#F3F5FC;border:1px solid #D6DBEA"></div>
<svg style="left:897px;top:145px" width="16" height="17" viewBox="0 0 16 17"><path d="M8 0.5 V16.5 M5 3.5 L8 0.5 L11 3.5 M5 13.5 L8 16.5 L11 13.5" fill="none" stroke="#1E1E1E" stroke-width="1.5"/><rect x="0" y="7" width="16" height="3" fill="#6A6A6A"/><path d="M8 6 V11" stroke="#1E1E1E" stroke-width="1.5"/></svg>
<svg style="left:899px;top:172px" width="11" height="7" viewBox="0 0 11 7"><path d="M0 6.5 L5.5 0.5 L11 6.5 Z" fill="#868999"/></svg>
<div class="a" style="left:890px;top:184px;width:29px;height:3px;background:#0000E0"></div>
<div class="a" style="left:895px;top:187px;width:19px;height:253px;background:#C2C3C9"></div>
<svg style="left:899px;top:724px" width="11" height="7" viewBox="0 0 11 7"><path d="M0 0.5 L5.5 6.5 L11 0.5 Z" fill="#868999"/></svg>
<div class="a" style="left:265px;top:739px;width:654px;height:21px;background:#E8E8EC"></div>
<div class="a" style="left:265px;top:739px;width:75px;height:21px;background:#F7F8FC"></div>
<div class="t" style="left:269px;top:741.5px;font-size:14px">100 %</div>
<svg style="left:328px;top:748px" width="8" height="5" viewBox="0 0 8 5"><path d="M0 0 H7.5 L3.75 4 Z" fill="#1E1E1E"/></svg>
<svg style="left:369px;top:742px" width="15" height="15" viewBox="0 0 15 15"><circle cx="7.5" cy="7.5" r="7.3" fill="#259B24"/><path d="M3.8 7.8 L6.3 10.2 L11 4.8" fill="none" stroke="#fff" stroke-width="2"/></svg>
<div class="t" style="left:390px;top:742px;font-size:13.7px">No issues found</div>
<div class="a" style="left:568px;top:741px;width:1px;height:17px;background:#C9CCD6"></div>
<svg style="left:587px;top:742px" width="15" height="15" viewBox="0 0 15 15"><path d="M1 8 L7 2 L12 7 L6 13 Z" fill="none" stroke="#717171" stroke-width="1.6"/><path d="M7 2 L10 0.5 L14 4.5 L12 7 Z" fill="#424242"/></svg>
<svg style="left:608px;top:748px" width="8" height="5" viewBox="0 0 8 5"><path d="M0 0 H7.5 L3.75 4 Z" fill="#1E1E1E"/></svg>
<svg style="left:654px;top:744px" width="7" height="11" viewBox="0 0 7 11"><path d="M6.5 0 L0.5 5.5 L6.5 11 Z" fill="#868999"/></svg>
<svg style="left:676.5px;top:744px" width="7" height="11" viewBox="0 0 7 11"><path d="M0.5 0 L6.5 5.5 L0.5 11 Z" fill="#868999"/></svg>
<div class="t" style="left:718.5px;top:742px;font-size:14px">Ln: 1</div>
<div class="t" style="left:771px;top:742px;font-size:14px">Ch: 1</div>
<div class="t" style="left:827.5px;top:742px;font-size:13.2px">SPC</div>
<div class="t" style="left:876px;top:742px;font-size:13px">CRLF</div>
<div class="a" style="left:929px;top:89px;width:180px;height:26px;background:#CFD7EF"></div>
<div class="t" style="left:934.5px;top:95px;color:#1E2A58">Form1.cs [Design]</div>
<svg style="left:1065px;top:97px" width="12" height="12" viewBox="0 0 12 12"><path d="M0.5 5.5 H5.5" stroke="#66729A" stroke-width="1.3"/><rect x="5" y="1" width="1.7" height="9.5" fill="#66729A"/><rect x="7.2" y="2.2" width="3.6" height="6.8" fill="none" stroke="#66729A" stroke-width="1.4"/></svg>
<svg style="left:1090px;top:98px" width="10" height="10" viewBox="0 0 10 10"><path d="M0.5 0.5 L9.5 9.5 M9.5 0.5 L0.5 9.5" stroke="#5F6885" stroke-width="1.4"/></svg>
<svg style="left:1578px;top:101px" width="10" height="5" viewBox="0 0 10 5"><path d="M0 0 H9.5 L4.75 4.5 Z" fill="#E6EAF6"/></svg>
<div class="a" style="left:929px;top:115px;width:662px;height:2px;background:#CFD7EF"></div>
<div class="a" style="left:929px;top:117px;width:662px;height:52px;background:#FDEBC8"></div>
<div class="a" style="left:929px;top:169px;width:662px;height:1px;background:#C6D0EC"></div>
<svg style="left:938px;top:124px" width="18" height="18" viewBox="0 0 18 18"><circle cx="9" cy="9" r="8.7" fill="#1BA1E2"/><rect x="7.7" y="7.3" width="2.6" height="7.2" fill="#fff"/><circle cx="9" cy="4.6" r="1.5" fill="#fff"/></svg>
<div class="t" style="left:965px;top:125.5px;color:#1E1E1E;font-size:14.75px">Scaling on your main display is set to 125%.</div>
<div class="t" style="left:1269.5px;top:125.5px;color:#0E70C0;font-size:14.75px">Restart Visual Studio with 100% scaling</div>
<div class="t" style="left:965px;top:146px;color:#0E70C0;font-size:15.3px">Help me decide</div>
<svg style="left:1568px;top:128px" width="12" height="12" viewBox="0 0 12 12"><path d="M0.7 0.7 L11.3 11.3 M11.3 0.7 L0.7 11.3" stroke="#9A7B3C" stroke-width="1.6"/></svg>
<div class="a" style="left:929px;top:170px;width:641px;height:568px;background:#F5F5F5;overflow:hidden">
<div class="a" style="left:16px;top:16px;width:700px;height:600px;border:1px dotted #555"></div>
<div class="a" style="left:19px;top:19px;width:700px;height:600px;border:1px solid #3A3A3A;border-top-left-radius:7px;background:#D6E4F2;overflow:hidden">
<div class="a" style="left:0;top:0;width:700px;height:36px;background:linear-gradient(to bottom,#BFCEDF,#D7E5F3)"></div>
<div class="a" style="left:8.5px;top:37px;width:700px;height:600px;background:#F0F0F0"></div>
</div>
<svg style="left:31px;top:33px" width="18" height="18" viewBox="0 0 18 18"><rect x="0.5" y="0.5" width="17" height="17" fill="#E4E8EE"/><rect x="1.5" y="8" width="6" height="6.5" fill="#C01818"/><rect x="3" y="9.5" width="2.5" height="2.5" fill="#fff"/><rect x="8.5" y="1" width="8" height="8" fill="#F5CA3C"/><rect x="8.5" y="11" width="8" height="5.5" fill="#3C7BE0"/></svg>
<div class="t" style="left:54px;top:34.5px;color:#9AA3B2">Visualizador de Imagens C#</div>
<div class="a" style="left:40px;top:69px;width:195px;height:442px;background:#fff;border:1px solid #828790"></div>
<div class="a" style="left:262px;top:76px;width:500px;height:434px;border:1px solid #DCDCDC;border-radius:2px"></div>
<div class="a" style="left:268px;top:70px;width:60px;height:14px;background:#F0F0F0"></div>
<div class="t" style="left:271px;top:69.5px;color:#000;font-size:13.6px">Imagens</div>
<div class="a" style="left:277px;top:90px;width:500px;height:415px;border:1px dashed #7A7A7A"></div>
<div class="a" style="left:465px;top:518px;width:106px;height:43px;background:#E1E1E1;border:1px solid #ADADAD"></div>
<svg style="left:511px;top:535px" width="11" height="11" viewBox="0 0 11 11"><path d="M5.5 0 V11 M0 5.5 H11" stroke="#000" stroke-width="2.2"/></svg>
<div class="a" style="left:624px;top:518px;width:60px;height:43px;background:#E1E1E1;border:1px solid #ADADAD"></div>
</div>
<div class="a" style="left:1570px;top:170px;width:21px;height:590px;background:#E8E8EC"></div>
<div class="a" style="left:929px;top:738px;width:662px;height:22px;background:#E8E8EC"></div>
<svg style="left:1575px;top:177px" width="11" height="7" viewBox="0 0 11 7"><path d="M0 6.5 L5.5 0.5 L11 6.5 Z" fill="#868999"/></svg>
<div class="a" style="left:1575px;top:191px;width:11px;height:486px;background:#C2C3C9"></div>
<svg style="left:1575px;top:725px" width="11" height="7" viewBox="0 0 11 7"><path d="M0 0.5 L5.5 6.5 L11 0.5 Z" fill="#868999"/></svg>
<svg style="left:936px;top:743.5px" width="7" height="11" viewBox="0 0 7 11"><path d="M6.5 0 L0.5 5.5 L6.5 11 Z" fill="#868999"/></svg>
<div class="a" style="left:950px;top:744px;width:371px;height:11px;background:#C2C3C9"></div>
<svg style="left:1556px;top:743.5px" width="7" height="11" viewBox="0 0 7 11"><path d="M0.5 0 L6.5 5.5 L0.5 11 Z" fill="#868999"/></svg>
<div class="a" style="left:265px;top:770px;width:1326px;height:27px;background:#40508D"></div>
<div class="t" style="left:269px;top:775.5px;color:#F4F6FB;">Output</div>
<svg style="left:1529px;top:780px" width="10" height="6" viewBox="0 0 10 6"><path d="M0 0 H10 L5.0 5 Z" fill="#B9C3E0"/></svg>
<svg style="left:1549px;top:776px" width="10" height="14" viewBox="0 0 10 14"><path d="M2 0.7 H8 M3 0.7 V8 H7 V0.7 M0.5 8.5 H9.5 M5 8.5 V13.5" fill="none" stroke="#B9C3E0" stroke-width="1.4"/></svg>
<svg style="left:1570px;top:777px" width="11" height="11" viewBox="0 0 11 11"><path d="M0.5 0.5 L10.5 10.5 M10.5 0.5 L0.5 10.5" stroke="#B9C3E0" stroke-width="1.5"/></svg>
<div class="a" style="left:265px;top:797px;width:1326px;height:32px;background:#CCD5F0"></div>
<div class="t" style="left:274px;top:806px;color:#1E1E1E;font-size:15.1px">Show output from:</div>
<div class="a" style="left:405px;top:800px;width:375px;height:24px;background:#F4F6FC"></div>
<svg style="left:766px;top:810px" width="9" height="6" viewBox="0 0 9 6"><path d="M0 0 H9 L4.5 5 Z" fill="#1E1E1E"/></svg>
<div class="a" style="left:788px;top:800px;width:1px;height:26px;background:#9AA5C4"></div>
<div class="a" style="left:825px;top:800px;width:1px;height:26px;background:#9AA5C4"></div>
<div class="a" style="left:889px;top:800px;width:1px;height:26px;background:#9AA5C4"></div>
<div class="a" style="left:926px;top:800px;width:1px;height:26px;background:#9AA5C4"></div>
<svg style="left:799px;top:803px" width="17" height="17" viewBox="0 0 17 17"><g fill="none" stroke="#A4AABA" stroke-width="1.6"><path d="M6 1 C3 1 2 3 2 5 L5 5"/><path d="M6 8 H16 M6 11 H16 M6 14 H16"/></g></svg>
<svg style="left:836px;top:803px" width="17" height="17" viewBox="0 0 17 17"><g fill="none" stroke="#A4AABA" stroke-width="1.6"><path d="M1 4 H9 M1 4 L4 1 M1 4 L4 7"/><path d="M6 9 H16 M6 12 H16 M6 15 H16"/></g></svg>
<svg style="left:863px;top:803px" width="17" height="17" viewBox="0 0 17 17"><g fill="none" stroke="#A4AABA" stroke-width="1.6"><path d="M1 4 H9 M9 4 L6 1 M9 4 L6 7"/><path d="M6 9 H16 M6 12 H16 M6 15 H16"/></g></svg>
<svg style="left:899px;top:803px" width="17" height="17" viewBox="0 0 17 17"><g fill="none" stroke="#A4AABA" stroke-width="1.6"><path d="M1 1 L6 6 M6 1 L1 6"/><path d="M8 3 H16 M1 9 H16 M1 12 H16 M1 15 H16"/></g></svg>
<svg style="left:935px;top:803px" width="19" height="17" viewBox="0 0 19 17"><text x="0" y="8" font-family="Liberation Sans" font-size="9.5" font-weight="bold" fill="#2A2A2A">ab</text><text x="0" y="16" font-family="Liberation Sans" font-size="9.5" font-weight="bold" fill="#2A2A2A">c</text><path d="M17 3 V12 H8.5 M8.5 12 L11.5 9 M8.5 12 L11.5 15" fill="none" stroke="#2A2A2A" stroke-width="2.2"/></svg>
<div class="a" style="left:265px;top:968px;width:72px;height:23px;background:#40508D"></div>
<div class="t" style="left:271px;top:973px;color:#E4E8F4;">Error List</div>
<div class="a" style="left:337px;top:967px;width:58px;height:25px;background:#F7F8FC"></div>
<div class="t" style="left:343px;top:973px;color:#1E1E1E;">Output</div>
<div class="a" style="left:1601px;top:90px;width:311px;height:27px;background:#40508D"></div>
<div class="t" style="left:1605px;top:96px;color:#F4F6FB;">Solution Explorer</div>
<svg style="left:1850px;top:100px" width="10" height="6" viewBox="0 0 10 6"><path d="M0 0 H10 L5.0 5 Z" fill="#B9C3E0"/></svg>
<svg style="left:1870px;top:97px" width="10" height="14" viewBox="0 0 10 14"><path d="M2 0.7 H8 M3 0.7 V8 H7 V0.7 M0.5 8.5 H9.5 M5 8.5 V13.5" fill="none" stroke="#B9C3E0" stroke-width="1.4"/></svg>
<svg style="left:1892px;top:98px" width="11" height="11" viewBox="0 0 11 11"><path d="M0.5 0.5 L10.5 10.5 M10.5 0.5 L0.5 10.5" stroke="#B9C3E0" stroke-width="1.5"/></svg>
<div class="a" style="left:1601px;top:117px;width:311px;height:34px;background:#CCD5F0"></div>
<svg style="left:1611px;top:126px" width="15" height="15" viewBox="0 0 15 15"><circle cx="7.5" cy="7.5" r="7" fill="#B8BDCB"/><path d="M3.8 7.5 L7 4.5 M3.8 7.5 L7 10.5 M3.8 7.5 H11" stroke="#D3D8E6" stroke-width="1.8" fill="none"/></svg>
<svg style="left:1638px;top:126px" width="15" height="15" viewBox="0 0 15 15"><circle cx="7.5" cy="7.5" r="7" fill="#B8BDCB"/><path d="M11.2 7.5 L8 4.5 M11.2 7.5 L8 10.5 M11.2 7.5 H4" stroke="#D3D8E6" stroke-width="1.8" fill="none"/></svg>
<svg style="left:1664px;top:124px" width="18" height="18" viewBox="0 0 18 18"><path d="M1 9 L9 1.5 L17 9 M3.5 7 V17 H14.5 V7" fill="none" stroke="#424242" stroke-width="1.6"/><rect x="7" y="11" width="4" height="6" fill="#424242"/></svg>
<svg style="left:1691px;top:124px" width="20" height="19" viewBox="0 0 20 19"><rect x="9" y="1" width="10" height="10" fill="#DCB067"/><rect x="1" y="7" width="10" height="10" fill="#CCD5F0" stroke="#424242" stroke-width="1.6"/><path d="M4 4 H8 M8 4 L6 2" stroke="#00539C" stroke-width="1.3" fill="none"/><path d="M18 15 H13 M13 15 L15 17" stroke="#00539C" stroke-width="1.3" fill="none"/></svg>
<svg style="left:1718px;top:132px" width="7" height="6" viewBox="0 0 7 6"><path d="M0 0 H7 L3.5 5 Z" fill="#1E1E1E"/></svg>
<div class="a" style="left:1733px;top:121px;width:1px;height:26px;background:#9AA5C4"></div>
<svg style="left:1745px;top:124px" width="18" height="19" viewBox="0 0 18 19"><circle cx="10" cy="11" r="6.5" fill="none" stroke="#424242" stroke-width="1.5"/><path d="M10 7 V11 H13" fill="none" stroke="#424242" stroke-width="1.4"/><path d="M0 0 H6 L3 4 Z" fill="#424242"/></svg>
<svg style="left:1771px;top:132px" width="7" height="6" viewBox="0 0 7 6"><path d="M0 0 H7 L3.5 5 Z" fill="#1E1E1E"/></svg>
<svg style="left:1786px;top:125px" width="16" height="17" viewBox="0 0 16 17"><path d="M15 5 H2 M2 5 L6 1 M2 5 L6 9 M1 12 H14 M14 12 L10 8 M14 12 L10 16" fill="none" stroke="#424242" stroke-width="1.8"/></svg>
<svg style="left:1813px;top:124px" width="16" height="18" viewBox="0 0 16 18"><path d="M13.5 10 A6 6 0 1 1 8.5 4.2" fill="none" stroke="#00539C" stroke-width="2.4"/><path d="M7 0.5 L13 4.2 L7 8 Z" fill="#00539C"/></svg>
<svg style="left:1841px;top:126px" width="16" height="15" viewBox="0 0 16 15"><path d="M5 4 V1 H15 V10 H12 M3 6 V3.5 H13 V12" fill="none" stroke="#424242" stroke-width="1.4"/><rect x="1" y="6" width="10" height="8" fill="#CCD5F0" stroke="#424242" stroke-width="1.6"/><path d="M3.5 10 H8.5" stroke="#00539C" stroke-width="1.4"/></svg>
<svg style="left:1865px;top:124px" width="19" height="19" viewBox="0 0 19 19"><path d="M3 12 V2 H8 M11 2 H15 L17 4 V12" fill="none" stroke="#424242" stroke-width="1.4"/><path d="M5.5 6.5 H11.5 L14 9 V18 H5.5 Z" fill="#CCD5F0" stroke="#424242" stroke-width="1.5"/><path d="M8 12 H12 M8 15 H12" stroke="#424242" stroke-width="1.2"/></svg>
<svg style="left:1900px;top:122px" width="10" height="6" viewBox="0 0 10 6"><path d="M0 0 L3 3 L0 6 Z M6 0 L9 3 L6 6 Z" fill="#1E1E1E"/></svg>
<div class="a" style="left:1601px;top:151px;width:311px;height:29px;background:#FCFCFE;border-bottom:2px solid #D5DDF3"></div>
<div class="t" style="left:1607px;top:157.5px;color:#717171;">Search Solution Explorer (Ctrl+´)</div>
<svg style="left:1877px;top:157px" width="16" height="15" viewBox="0 0 16 15"><circle cx="10" cy="5.5" r="4" fill="none" stroke="#424242" stroke-width="2"/><path d="M7.3 8.3 L2 13.5" stroke="#424242" stroke-width="2.6" stroke-linecap="round"/></svg>
<svg style="left:1900px;top:162px" width="7" height="6" viewBox="0 0 7 6"><path d="M0 0 H7 L3.5 5 Z" fill="#424242"/></svg>
<div class="a" style="left:1601px;top:319px;width:311px;height:23px;background:#E4E6EB"></div>
<div class="a" style="left:1601px;top:178px;width:311px;height:384px;overflow:hidden">
<svg style="left:16px;top:6px" width="19" height="17" viewBox="0 0 19 17"><rect x="3" y="0.5" width="15.5" height="2.6" fill="#424242"/><path d="M3.7 3 V6 M17.8 3 V13 H11.5" fill="none" stroke="#424242" stroke-width="1.4"/><path fill="#865FC5" fill-rule="evenodd" d="M7 6 L9.5 7 V15 L7 16 L3 12.3 L1.3 13.5 L0.2 13 V9 L1.3 8.5 L3 9.7 Z M7.1 9 L4.6 11 L7.1 13 Z M1.4 10.2 V11.8 L2.3 11 Z"/></svg>
<div class="t" style="left:41px;top:7px;color:#1E1E1E;font-size:15px">Solution 'GaleriaImagens' (1 of 1 project)</div>
<svg style="left:13px;top:34px" width="9" height="8" viewBox="0 0 9 8"><path d="M8.5 0 V7.5 H1 Z" fill="#1E1E1E"/></svg>
<svg style="left:38.5px;top:30.5px" width="18" height="16" viewBox="0 0 18 16"><rect x="0.8" y="0.8" width="16.4" height="14.4" fill="#F7F8FC" stroke="#388A34" stroke-width="1.5"/><text x="3" y="11.5" font-family="Liberation Sans" font-size="10" font-weight="bold" fill="#424242">C#</text></svg>
<div class="t" style="left:64px;top:30px;color:#1E1E1E;font-weight:bold">GaleriaImagens</div>
<svg style="left:36px;top:55px" width="8" height="11" viewBox="0 0 8 11"><path d="M1 0.8 L7 5.5 L1 10.2 Z" fill="none" stroke="#1E1E1E" stroke-width="1.2"/></svg>
<svg style="left:61px;top:52px" width="18" height="18" viewBox="0 0 18 18"><path d="M2 16 L9 9" stroke="#424242" stroke-width="3.5" stroke-linecap="round"/><path d="M8 9 A5 5 0 0 1 13 2 L11 5 L13.5 7.5 L16.5 5 A5 5 0 0 1 9.5 10 Z" fill="#424242"/></svg>
<div class="t" style="left:86.5px;top:53px;color:#1E1E1E;">Properties</div>
<svg style="left:36px;top:78px" width="8" height="11" viewBox="0 0 8 11"><path d="M1 0.8 L7 5.5 L1 10.2 Z" fill="none" stroke="#1E1E1E" stroke-width="1.2"/></svg>
<svg style="left:61px;top:77px" width="18" height="10" viewBox="0 0 18 10"><rect x="0" y="2.5" width="5" height="5" fill="#424242"/><rect x="6.5" y="4.3" width="2" height="1.5" fill="#424242"/><rect x="10" y="1" width="7.5" height="8" fill="#424242"/></svg>
<div class="t" style="left:86.5px;top:76px;color:#1E1E1E;">References</div>
<svg style="left:61px;top:98px" width="17" height="18" viewBox="0 0 17 18"><path d="M5.5 4.5 V1 H11 L15.8 5.8 V17.2 H6.5" fill="none" stroke="#424242" stroke-width="1.4"/><path d="M11 1 V5.8 H15.8" fill="none" stroke="#424242" stroke-width="1.2"/><path d="M0.5 7 H7 V10.5 A3.25 3 0 0 1 0.5 10.5 Z" fill="#2A2A2A"/><rect x="1.3" y="4" width="1.5" height="3.5" fill="#2A2A2A"/><rect x="4.7" y="4" width="1.5" height="3.5" fill="#2A2A2A"/><rect x="3" y="12.5" width="1.6" height="5" fill="#2A2A2A"/></svg>
<div class="t" style="left:86.5px;top:99px;color:#1E1E1E;">App.config</div>
<svg style="left:36px;top:124px" width="8" height="11" viewBox="0 0 8 11"><path d="M1 0.8 L7 5.5 L1 10.2 Z" fill="none" stroke="#1E1E1E" stroke-width="1.2"/></svg>
<svg style="left:61px;top:122px" width="18" height="16" viewBox="0 0 18 16"><rect x="0.8" y="0.8" width="16.4" height="14.4" fill="none" stroke="#424242" stroke-width="1.6"/><rect x="0.8" y="0.8" width="16.4" height="3" fill="#424242"/><path d="M3 7.5 H7 M9 7.5 H15 M3 11 H7 M9 11 H15" stroke="#424242" stroke-width="1.6"/></svg>
<div class="t" style="left:86.5px;top:122px;color:#1E1E1E;">Form1.cs</div>
<svg style="left:36px;top:147px" width="8" height="11" viewBox="0 0 8 11"><path d="M1 0.8 L7 5.5 L1 10.2 Z" fill="none" stroke="#1E1E1E" stroke-width="1.2"/></svg>
<svg style="left:62px;top:146px" width="18" height="14" viewBox="0 0 18 14"><text x="0" y="11.5" font-family="Liberation Sans" font-size="12" font-weight="bold" fill="#388A34">C#</text></svg>
<div class="t" style="left:86.5px;top:145px;color:#1E1E1E;">Program.cs</div>
</div>
<div class="a" style="left:1601px;top:562px;width:311px;height:21px;background:#E8E8EC"></div>
<svg style="left:1609px;top:567px" width="7" height="11" viewBox="0 0 7 11"><path d="M6.5 0 L0.5 5.5 L6.5 11 Z" fill="#868999"/></svg>
<div class="a" style="left:1622px;top:567px;width:266px;height:11px;background:#C2C3C9"></div>
<svg style="left:1899px;top:567px" width="7" height="11" viewBox="0 0 7 11"><path d="M0.5 0 L6.5 5.5 L0.5 11 Z" fill="#868999"/></svg>
<div class="a" style="left:1601px;top:583px;width:126px;height:24px;background:#F7F8FC"></div>
<div class="t" style="left:1607px;top:588px;color:#1E1E1E;">Solution Explorer</div>
<div class="a" style="left:1727px;top:584px;width:109px;height:22px;background:#40508D"></div>
<div class="t" style="left:1736px;top:588px;color:#E4E8F4;">Team Explorer</div>
<div class="a" style="left:1601px;top:617px;width:311px;height:27px;background:#40508D"></div>
<div class="t" style="left:1605.5px;top:622.5px;color:#F4F6FB;">Properties</div>
<svg style="left:1850px;top:627px" width="10" height="6" viewBox="0 0 10 6"><path d="M0 0 H10 L5.0 5 Z" fill="#B9C3E0"/></svg>
<svg style="left:1870px;top:624px" width="10" height="14" viewBox="0 0 10 14"><path d="M2 0.7 H8 M3 0.7 V8 H7 V0.7 M0.5 8.5 H9.5 M5 8.5 V13.5" fill="none" stroke="#B9C3E0" stroke-width="1.4"/></svg>
<svg style="left:1892px;top:625px" width="11" height="11" viewBox="0 0 11 11"><path d="M0.5 0.5 L10.5 10.5 M10.5 0.5 L0.5 10.5" stroke="#B9C3E0" stroke-width="1.5"/></svg>
<div class="a" style="left:1601px;top:644px;width:311px;height:29px;background:#FBFBFE"></div>
<svg style="left:1899px;top:657px" width="7" height="6" viewBox="0 0 7 6"><path d="M0 0 H7 L3.5 5 Z" fill="#1E1E1E"/></svg>
<div class="a" style="left:1601px;top:673px;width:311px;height:31px;background:#CCD5F0"></div>
<div class="a" style="left:1604px;top:674px;width:29px;height:28px;background:#FFF0C6;border:1px solid #E5C365"></div>
<svg style="left:1609px;top:680px" width="18" height="16" viewBox="0 0 18 16"><g fill="#424242"><rect x="0" y="0.5" width="5" height="5"/><rect x="0" y="10" width="5" height="5"/><rect x="7" y="0.5" width="11" height="1.3"/><rect x="7" y="3.3" width="11" height="1.3"/><rect x="7" y="6" width="11" height="1.3"/><rect x="7" y="10" width="11" height="1.3"/><rect x="7" y="13" width="8" height="1.3"/></g><g fill="#FFF0C6"><rect x="1.5" y="2.5" width="2" height="1"/><rect x="1.5" y="12" width="2" height="1"/></g></svg>
<svg style="left:1638px;top:679px" width="19" height="18" viewBox="0 0 19 18"><rect x="0" y="0" width="9" height="9" fill="#424242"/><rect x="0" y="9" width="9" height="9" fill="#424242"/><text x="1.2" y="8" font-family="Liberation Sans" font-size="8.5" font-weight="bold" fill="#F0F0F0">A</text><text x="1.5" y="17" font-family="Liberation Sans" font-size="8.5" font-weight="bold" fill="#F0F0F0">Z</text><path d="M14 3 V15 M10.5 11.5 L14 15 L17.5 11.5" fill="none" stroke="#00539C" stroke-width="2.2"/></svg>
<div class="a" style="left:1665px;top:676px;width:1px;height:25px;background:#9AA5C4"></div>
<svg style="left:1673px;top:679px" width="18" height="18" viewBox="0 0 18 18"><path d="M2 16 L9 9" stroke="#A4AABA" stroke-width="3.5" stroke-linecap="round"/><path d="M8 9 A5 5 0 0 1 13 2 L11 5 L13.5 7.5 L16.5 5 A5 5 0 0 1 9.5 10 Z" fill="#A4AABA"/></svg>
<div class="a" style="left:1601px;top:913px;width:311px;height:1px;background:#E6E8EE"></div>
<svg style="left:6px;top:1009px" width="20" height="14" viewBox="0 0 20 14"><path d="M4.5 1 H19 L15.5 13 H1 Z" fill="none" stroke="#F0F2F8" stroke-width="1.4"/></svg>
<div class="t" style="left:35px;top:1008px;color:#FFFFFF;">Ready</div>
<svg style="left:1658px;top:1008px" width="12" height="15" viewBox="0 0 12 15"><path d="M6 15 V4" fill="none" stroke="#D6DAE6" stroke-width="2.6"/><path d="M0.5 7 L6 1 L11.5 7 Z" fill="#D6DAE6"/></svg>
<div class="t" style="left:1681px;top:1008px;color:#FFFFFF;font-size:14.9px">Add to Source Control</div>
<svg style="left:1837px;top:1012px" width="9" height="6" viewBox="0 0 9 6"><path d="M0 5.5 L4.5 0.5 L9 5.5 Z" fill="#FFFFFF"/></svg>
<svg style="left:1871px;top:1006px" width="28" height="24" viewBox="0 0 28 24"><g transform="rotate(-12 8 8)"><path d="M8 1.5 A5 5 0 0 1 13 6.5 V11 L15 14 H1 L3 11 V6.5 A5 5 0 0 1 8 1.5 Z" fill="#D8DCE8"/><rect x="6" y="14.5" width="4" height="2.2" fill="#D8DCE8"/></g><circle cx="18.6" cy="13.7" r="7.6" fill="#E51400"/><text x="15.6" y="18.3" font-family="Liberation Sans" font-size="12" fill="#fff">1</text></svg>
<div class="a" style="left:60px;top:1030px;width:430px;height:9px;background:#F0F0F0"></div>
<div class="a" style="left:988px;top:1030px;width:61px;height:9px;background:#4F5F67"></div>
<div class="t" style="left:1789px;top:1034.5px;color:#fff;font-size:13px">23:59</div>
</body></html>
